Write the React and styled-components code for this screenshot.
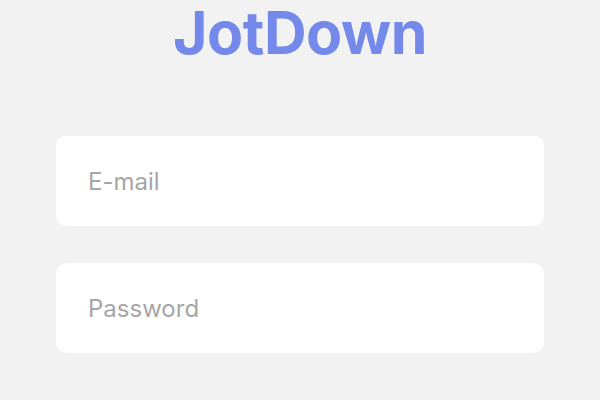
import React from 'react';
import styled, { createGlobalStyle } from 'styled-components';

const GlobalStyle = createGlobalStyle`
  html, body {
    margin: 0;
    padding: 0;
    background-color: #F2F2F2;
    font-family: Inter, "Liberation Sans", sans-serif;
  }
`;

const Screen = styled.div`
  display: flex;
  flex-direction: column;
  align-items: center;
  height: 400px;
  padding: 0 56px;
  box-sizing: border-box;
`;

const Title = styled.h1`
  margin: 0;

  font-weight: 700;
  font-size: 59px;
  line-height: 66px;
  letter-spacing: -0.5px;
  color: #7489EA;
`;

const Form = styled.form`
  display: flex;
  flex-direction: column;
  gap: 37px;
  width: 100%;
  margin-top: 70px;
`;

const Input = styled.input`
  height: 90px;
  padding: 0 32px;
  box-sizing: border-box;
  border: none;
  border-radius: 10px;
  outline: none;

  background-color: #FFFFFF;
  font-family: Inter, "Liberation Sans", sans-serif;
  font-size: 24px;
  color: #333333;

  &::placeholder {
    color: #A6A6A6;
  }
`;

const App = () => (
  <Screen>
    <GlobalStyle />
    <Title>JotDown</Title>
    <Form>
      <Input type="email" placeholder="E-mail" />
      <Input type="password" placeholder="Password" />
    </Form>
  </Screen>
);

export default App;
